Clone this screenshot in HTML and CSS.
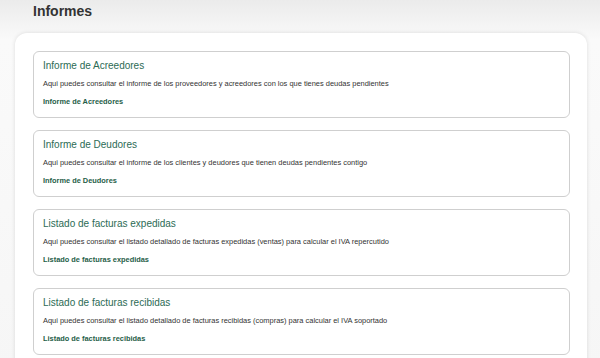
FILE: index.html
```html
<!DOCTYPE html>
<html lang="es">
<head>
  <meta charset="UTF-8">
  <meta name="viewport" content="width=device-width, initial-scale=1.0">
  <title>Informes</title>
  <link rel="stylesheet" href="styles.css">
</head>
<body>
  <header class="page-header">
    <h1>Informes</h1>
  </header>

  <main class="panel">
    <div class="report-card">
      <h2>Informe de Acreedores</h2>
      <p>Aqui puedes consultar el informe de los proveedores y acreedores con los que tienes deudas pendientes</p>
      <a href="#">Informe de Acreedores</a>
    </div>

    <div class="report-card">
      <h2>Informe de Deudores</h2>
      <p>Aqui puedes consultar el informe de los clientes y deudores que tienen deudas pendientes contigo</p>
      <a href="#">Informe de Deudores</a>
    </div>

    <div class="report-card">
      <h2>Listado de facturas expedidas</h2>
      <p>Aqui puedes consultar el listado detallado de facturas expedidas (ventas) para calcular el IVA repercutido</p>
      <a href="#">Listado de facturas expedidas</a>
    </div>

    <div class="report-card">
      <h2>Listado de facturas recibidas</h2>
      <p>Aqui puedes consultar el listado detallado de facturas recibidas (compras) para calcular el IVA soportado</p>
      <a href="#">Listado de facturas recibidas</a>
    </div>
  </main>
</body>
</html>
```

FILE: styles.css
```css
* {
  box-sizing: border-box;
}

body {
  margin: 0;
  font-family: "Liberation Sans", Arial, sans-serif;
  color: #333;
  background: linear-gradient(to bottom, #ebebeb 0, #fafafa 40px, #f6f6f6 100%);
  min-height: 100vh;
}

.page-header {
  padding: 3px 33px 0;
  height: 33px;
}

.page-header h1 {
  margin: 0;
  font-size: 14px;
  line-height: 17px;
  font-weight: bold;
  color: #333;
}

.panel {
  margin: 0 13px 0 15px;
  padding: 18px 17px 18px 18px;
  background: #fff;
  border-radius: 12px;
  box-shadow: 0 0 4px rgba(0,0,0,0.12);
  display: flex;
  flex-direction: column;
  gap: 12px;
}

.report-card {
  border: 1px solid #cfcfcf;
  border-radius: 6px;
  padding: 7px 9px 10px;
  background: #fff;
}

.report-card h2 {
  margin: 0 0 7px;
  font-size: 10px;
  line-height: 13px;
  font-weight: normal;
  color: #2c6b55;
}

.report-card p {
  margin: 0 0 8px;
  font-size: 7.45px;
  line-height: 10px;
  color: #333;
}

.report-card a {
  display: block;
  font-size: 7.4px;
  line-height: 10px;
  font-weight: bold;
  color: #1f5e48;
  text-decoration: none;
}
```
